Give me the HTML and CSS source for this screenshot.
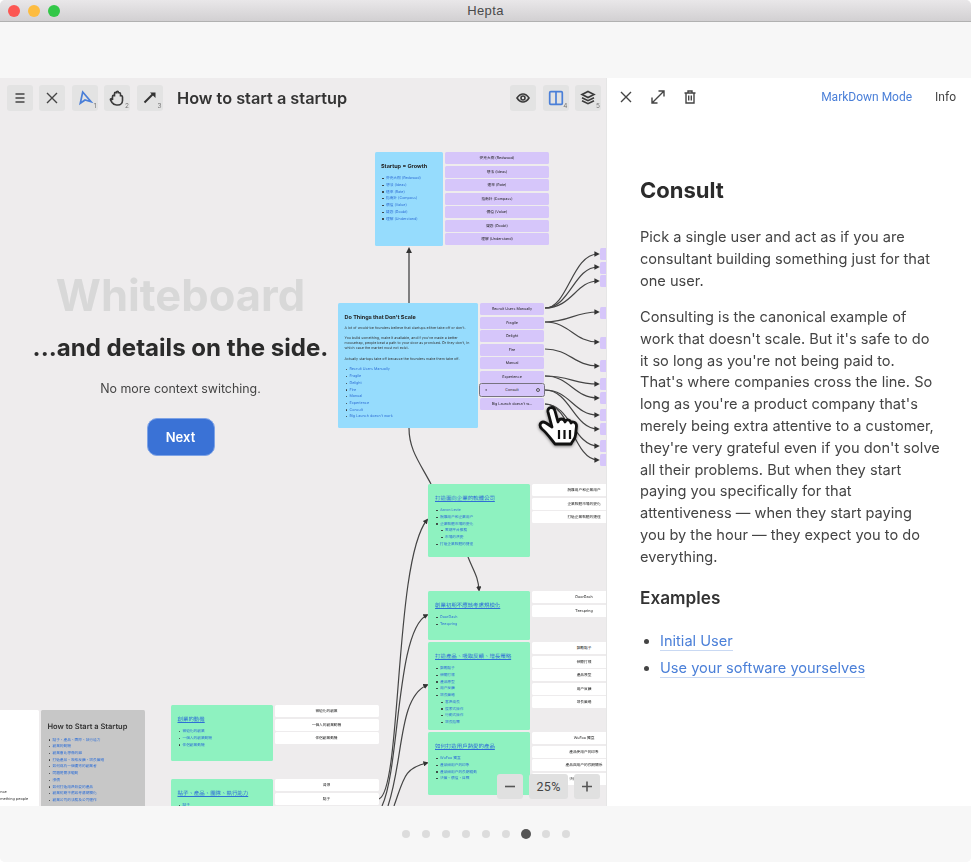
FILE: index.html
```html
<!DOCTYPE html>
<html lang="en">
<head>
<meta charset="utf-8">
<title>Hepta</title>
<link rel="stylesheet" href="styles.css">
</head>
<body>
<div class="window">
  <header class="titlebar">
    <div class="lights"><i class="light red"></i><i class="light yellow"></i><i class="light green"></i></div>
    <span class="app-name">Hepta</span>
  </header>
  <div class="band"></div>
  <main class="main">
    <section class="board">
      <svg class="wires" viewBox="0 0 606 728" width="606" height="728">
        <defs><marker id="tip" viewBox="0 0 6 6" refX="4" refY="3" markerWidth="4.500" markerHeight="4.500" orient="auto"><path d="M0 0L6 3L0 6Z" fill="#333"/></marker></defs>
        <g fill="none" stroke="#444" stroke-width="1.200" marker-end="url(#tip)">
          <path d="M409 225V171" stroke-width="1.300"/>
          <path d="M545 230C568 230 572 176 598 176"/>
          <path d="M545 230C570 230 574 189 598 189"/>
          <path d="M545 230C572 230 576 203 598 203"/>
          <path d="M545 244C570 244 574 234 598 234"/>
          <path d="M545 244C570 244 574 264 598 264"/>
          <path d="M545 271C570 271 574 288 598 288"/>
          <path d="M545 298C570 298 574 306 598 306"/>
          <path d="M545 298C570 298 574 320 598 320"/>
          <path d="M545 312C570 312 574 337 598 337"/>
          <path d="M545 312C570 312 574 351 598 351"/>
          <path d="M545 326C570 326 574 368 598 368"/>
          <path d="M545 326C570 326 574 382 598 382"/>
          <path d="M468 479C474 494 478 498 479 512"/>
          <path d="M379 721C402 712 394 482 427 442"/>
          <path d="M382 728C400 690 396 552 427 537"/>
          <path d="M388 728C404 680 398 620 427 607"/>
          <path d="M394 728C404 700 404 690 427 685"/>
        </g>
        <path class="wire-plain" d="M409 350C409 372 420 385 431 406"/>
      </svg>

      <div class="node startup">
        <div class="card blue">
          <h3 class="card-title">Startup = Growth</h3>
          <ul class="items">
            <li><a>麥克大樹 (Redwood)</a></li><li><a>想法 (Ideas)</a></li><li><a>速率 (Rate)</a></li><li><a>指南針 (Compass)</a></li><li><a>價值 (Value)</a></li><li><a>疑惑 (Doubt)</a></li><li><a>理解 (Understand)</a></li>
          </ul>
        </div>
        <div class="rows purple">
          <div class="row">麥克大樹 (Redwood)</div><div class="row">想法 (Ideas)</div><div class="row">速率 (Rate)</div><div class="row">指南針 (Compass)</div><div class="row">價值 (Value)</div><div class="row">疑惑 (Doubt)</div><div class="row">理解 (Understand)</div>
        </div>
      </div>

      <div class="node scale">
        <div class="card blue">
          <h3 class="card-title">Do Things that Don't Scale</h3>
          <p class="note">A lot of would-be founders believe that startups either take off or don't.</p>
          <p class="note">You build something, make it available, and if you've made a better mousetrap, people beat a path to your door as promised. Or they don't, in which case the market must not exist.</p>
          <p class="note after-gap">Actually startups take off because the founders make them take off.</p>
          <ul class="items">
            <li><a>Recruit Users Manually</a></li><li><a>Fragile</a></li><li><a>Delight</a></li><li><a>Fire</a></li><li><a>Manual</a></li><li><a>Experience</a></li><li><a>Consult</a></li><li><a>Big Launch doesn't work</a></li>
          </ul>
        </div>
        <div class="rows purple">
          <div class="row">Recruit Users Manually</div><div class="row">Fragile</div><div class="row">Delight</div><div class="row">Fire</div><div class="row">Manual</div><div class="row">Experience</div>
          <div class="row active"><span class="mini-x">×</span>Consult<span class="mini-o"></span></div>
          <div class="row">Big Launch doesn't w...</div>
        </div>
      </div>

      <div class="stub s1"></div><div class="stub s2"></div><div class="stub s3"></div><div class="stub s4"></div><div class="stub s5"></div><div class="stub s6"></div><div class="stub s7"></div><div class="stub s8"></div><div class="stub s9"></div><div class="stub s10"></div><div class="stub s11"></div><div class="stub s12"></div>

      <div class="node g1">
        <div class="card mint">
          <h3 class="card-link"><a>打造面向企業的軟體公司</a></h3>
          <ul class="items">
            <li><a>Aaron Levie</a></li><li><a>脫離用户和企業用户</a></li><li><a>企業軟體市場的變化</a>
              <ul><li><a>雲端平台服務</a></li><li><a>市場的演變</a></li></ul></li><li><a>打造企業軟體的捷徑</a></li>
          </ul>
        </div>
        <div class="rows">
          <div class="row">脫離用户和企業用户</div><div class="row">企業軟體市場的變化</div><div class="row">打造企業軟體的捷徑</div>
        </div>
      </div>

      <div class="node g2">
        <div class="card mint">
          <h3 class="card-link"><a>創業初期不應該考慮規模化</a></h3>
          <ul class="items"><li><a>DoorDash</a></li><li><a>Teespring</a></li></ul>
        </div>
        <div class="rows"><div class="row">DoorDash</div><div class="row">Teespring</div></div>
      </div>

      <div class="node g3">
        <div class="card mint">
          <h3 class="card-link"><a>打造產品、吸取反饋、增長策略</a></h3>
          <ul class="items">
            <li><a>鼓勵點子</a></li><li><a>傾聽打樣</a></li><li><a>產品原型</a></li><li><a>用户反饋</a></li><li><a>增長策略</a>
              <ul><li><a>客戶成長</a></li><li><a>搜索式操作</a></li><li><a>行動式操作</a></li><li><a>增長指標</a></li></ul></li>
          </ul>
        </div>
        <div class="rows">
          <div class="row">鼓勵點子</div><div class="row">傾聽打樣</div><div class="row">產品原型</div><div class="row">用户反饋</div><div class="row">增長策略</div>
        </div>
      </div>

      <div class="node g4">
        <div class="card mint">
          <h3 class="card-link"><a>如何打造用戶熱愛的產品</a></h3>
          <ul class="items"><li><a>WuFoo 獨立</a></li><li><a>產品給用户的印象</a></li><li><a>產品給用户的長期驅動</a></li><li><a>決策、價值、目標</a></li></ul>
        </div>
        <div class="rows">
          <div class="row">WuFoo 獨立</div><div class="row">產品使用户的印象</div><div class="row">產品與用户的長期關係</div><div class="row">決策、價值、目標</div>
        </div>
      </div>

      <div class="node ga">
        <div class="card mint">
          <h3 class="card-link"><a>創業的動機</a></h3>
          <ul class="items"><li><a>被迫化的創業</a></li><li><a>一個人的創業動機</a></li><li><a>伴侶創業動機</a></li></ul>
        </div>
        <div class="rows"><div class="row">被迫化的創業</div><div class="row">一個人的創業動機</div><div class="row">伴侶創業動機</div></div>
      </div>

      <div class="node gb">
        <div class="card mint">
          <h3 class="card-link"><a>點子、產品、團隊、執行能力</a></h3>
          <ul class="items"><li><a>點子</a></li></ul>
        </div>
        <div class="rows"><div class="row">資源</div><div class="row">點子</div><div class="row row-empty"></div></div>
      </div>

      <div class="node root">
        <div class="edge-card"><p>ance</p><p>omething people</p></div>
        <div class="card gray">
          <h3 class="root-title">How to Start a Startup</h3>
          <ul class="items">
            <li><a>點子、產品、團隊、執行能力</a></li><li><a>創業的動機</a></li><li><a>創業會比想像的難</a></li><li><a>打造產品、吸取反饋、增長策略</a></li><li><a>如何成為一個優秀的創業者</a></li><li><a>問題是需求驅動</a></li><li><a>漲價</a></li><li><a>如何打造用戶熱愛的產品</a></li><li><a>創業初期不應該考慮規模化</a></li><li><a>創業公司的法務及公司運作</a></li>
          </ul>
        </div>
      </div>

      <svg class="pointer" viewBox="0 0 44 44" width="44" height="44">
        <path d="M14 24L10 9C9 3.500 16 3 17 8L20 19C21 15 26 15 27 19C28 16 32 16 33 20C34 18 38.500 19 38.500 23L37.500 32C37.500 36 34 38 33 41L17 41C13 36 9 30 4 26C0 22 3 17 8 20Z"/>
        <path class="pointer-lines" d="M21 27V36M26.500 27V36M32 27V36"/>
      </svg>

      <div class="toolbar">
        <div class="tools">
          <button class="tool"><svg viewBox="0 0 26 26"><path d="M8.500 9H17.500M8.500 13H17.500M8.500 17H17.500"/></svg></button>
          <button class="tool"><svg viewBox="0 0 26 26"><path d="M8 8L18 18M18 8L8 18"/></svg></button>
          <button class="tool"><svg class="on" viewBox="0 0 26 26"><path d="M10.700 7L19 16.700L13 15L8.300 18.300Z"/></svg><sub>1</sub></button>
          <button class="tool"><svg class="heavy" viewBox="0 0 26 26"><path d="M8.500 15V11.500C8.500 10 10.500 10 10.500 11.500V8.500C10.500 7 12.500 7 12.500 8.500V7.500C12.500 6 14.500 6 14.500 7.500V8.500C14.500 7.500 16.500 7.500 16.500 9V11.500C16.500 10.500 18.500 10.500 18.500 12V15.500C18.500 18 16.500 20 14 20H12.500C10.500 20 9 19 8 17.500L6.500 15C6 13.500 7.800 13 8.500 15Z"/></svg><sub>2</sub></button>
          <button class="tool"><svg class="bold" viewBox="0 0 26 26"><path d="M7.500 17.500L16 9"/><path class="solid" d="M13 7.500H18.500V13Z"/></svg><sub>3</sub></button>
        </div>
        <h2 class="doc-title">How to start a startup</h2>
        <div class="tools">
          <button class="tool"><svg class="heavy" viewBox="0 0 26 26"><path d="M7 13C9 10 11 9 13 9S17 10 19 13C17 16 15 17 13 17S9 16 7 13Z"/><circle cx="13" cy="13" r="2"/></svg></button>
          <button class="tool"><svg class="on" viewBox="0 0 26 26"><rect x="6.700" y="6.700" width="12.600" height="12.600" rx="1"/><path d="M13 6.700V19.300"/></svg><sub>4</sub></button>
          <button class="tool"><svg class="heavy" viewBox="0 0 26 26"><path d="M13 6.500L19 9.500L13 12.500L7 9.500Z"/><path d="M7 12.700L13 15.700L19 12.700M7 15.700L13 18.700L19 15.700"/></svg><sub>5</sub></button>
        </div>
      </div>

      <div class="hero">
        <h1 class="hero-faint">Whiteboard</h1>
        <p class="hero-main">...and details on the side.</p>
        <p class="hero-sub">No more context switching.</p>
        <button class="next">Next</button>
      </div>

      <div class="zoom">
        <button class="zoom-btn"><svg viewBox="0 0 26 25"><path d="M8 12.500H18"/></svg></button>
        <button class="zoom-btn pct">25%</button>
        <button class="zoom-btn"><svg viewBox="0 0 26 25"><path d="M8 12.500H18M13 7.500V17.500"/></svg></button>
      </div>
    </section>

    <aside class="panel">
      <div class="panel-bar">
        <svg class="ico" viewBox="0 0 20 20"><path d="M5 5L15 15M15 5L5 15"/></svg>
        <svg class="ico" viewBox="0 0 20 20"><path d="M4 16L16 4M10.500 4H16V9.500M4 10.500V16H9.500"/></svg>
        <svg class="ico" viewBox="0 0 20 20"><path d="M4.500 6H15.500M8 6V4H12V6M6 6V16H14V6M8.700 8.500V13.500M11.300 8.500V13.500"/></svg>
        <a class="mode">MarkDown Mode</a>
        <span class="info">Info</span>
      </div>
      <article class="doc">
        <h1>Consult</h1>
        <p>Pick a single user and act as if you are consultant building something just for that one user.</p>
        <p>Consulting is the canonical example of work that doesn't scale. But it's safe to do it so long as you're not being paid to. That's where companies cross the line. So long as you're a product company that's merely being extra attentive to a customer, they're very grateful even if you don't solve all their problems. But when they start paying you specifically for that attentiveness — when they start paying you by the hour — they expect you to do everything.</p>
        <h2>Examples</h2>
        <ul>
          <li><a>Initial User</a></li>
          <li><a>Use your software yourselves</a></li>
        </ul>
      </article>
    </aside>
  </main>
  <footer class="pager">
    <i class="dot"></i><i class="dot"></i><i class="dot"></i><i class="dot"></i><i class="dot"></i><i class="dot"></i><i class="dot current"></i><i class="dot"></i><i class="dot"></i>
  </footer>
</div>
</body>
</html>
```
FILE: styles.css
```css
* { box-sizing: border-box; }
html, body { margin: 0; height: 100%; background: #fff; }
body { font-family: Inter, "Noto Sans CJK TC", sans-serif; overflow: hidden; }
ul, p, h1, h2, h3 { margin: 0; padding: 0; }
button { font-family: inherit; border: 0; padding: 0; }

.window { width: 971px; height: 862px; display: flex; flex-direction: column; border-radius: 5px; overflow: hidden; background: #f7f7f7; filter: blur(.3px); }

.titlebar { height: 22px; flex: none; position: relative; display: flex; align-items: center; justify-content: center; background: linear-gradient(#e9e7e9, #d2d0d2); border-bottom: 1px solid #b1b1b1; }
.lights { position: absolute; left: 8px; top: 5px; display: flex; gap: 8px; }
.light { width: 12px; height: 12px; border-radius: 50%; }
.red { background: #fc5753; }
.yellow { background: #fdbc40; }
.green { background: #33c748; }
.app-name { font: 13px "Liberation Sans", sans-serif; color: #4a4a4a; letter-spacing: .4px; }

.band { height: 56px; flex: none; background: #f7f7f7; }

.main { height: 728px; flex: none; display: flex; }
.board { width: 606px; flex: none; position: relative; overflow: hidden; background: #eeeced; }
.panel { flex: 1; background: #fff; border-left: 1px solid #e6e6e6; }

.wires { position: absolute; left: 0; top: 0; filter: blur(.25px); }
.wire-plain { fill: none; stroke: #444; stroke-width: 1.200; }

.node { position: absolute; display: flex; gap: 2px; align-items: flex-start; text-rendering: geometricPrecision; filter: blur(.5px); }
.card { border-radius: 1.500px; flex: none; }
.blue { background: #96dcfd; }
.mint { background: #8ef2c0; width: 102px; padding: 10.500px 7px; }
.gray { background: #c7c7c7; width: 104px; height: 120px; padding: 12px 6.500px; }
.rows { display: flex; flex-direction: column; gap: 1.500px; width: 104px; flex: none; }
.row { height: 12px; border-radius: 1.500px; background: #fff; font-size: 3.700px; line-height: 12px; color: #222; text-align: center; position: relative; }
.purple .row { background: #d6c6fa; }

.card-title { font-size: 5.500px; font-weight: 700; color: #222; line-height: 8px; margin-bottom: 4.800px; }
.card-link { font-size: 5.450px; font-weight: 400; line-height: 8px; margin-bottom: 4.800px; }
.card-link a { color: #2f6fd6; text-decoration: underline; text-decoration-thickness: .4px; }
.root-title { font-size: 7.500px; font-weight: 600; color: #333; line-height: 10px; margin-bottom: 4.650px; }
.note { font-size: 3.600px; line-height: 5.300px; color: #333; margin-bottom: 4px; }
.after-gap { margin-top: 5.700px; }
.items { list-style: none; padding-left: 5px; font-size: 3.700px; line-height: 6.700px; color: #333; }
.items ul { list-style: none; padding-left: 5px; }
.items li { position: relative; }
.items li::before { content: ""; position: absolute; left: -3.600px; top: 2.700px; width: 1.300px; height: 1.300px; border-radius: 50%; background: #333; }
.items a { color: #2f6fd6; }

.startup { left: 374.500px; top: 74px; }
.startup .card { width: 68.500px; height: 94px; padding: 10.500px 6.500px; }
.scale { left: 338px; top: 225px; }
.scale .card { width: 140px; height: 125px; padding: 10.500px 6.500px; }
.scale .rows { width: 64px; }
.active { outline: 1px solid #77737f; outline-offset: -.5px; }
.mini-x { position: absolute; left: 5px; top: 0; }
.mini-o { position: absolute; right: 4px; top: 4px; width: 4px; height: 4px; border: .6px solid #555; border-radius: 50%; }

.g1 { left: 428px; top: 406px; }
.g1 .card { height: 73px; }
.g2 { left: 428px; top: 513px; }
.g2 .card { height: 49px; }
.g3 { left: 428px; top: 564px; }
.g3 .card { height: 88px; }
.g4 { left: 428px; top: 654px; }
.g4 .card { height: 63px; }
.ga { left: 170.500px; top: 627px; }
.ga .card { height: 56px; }
.gb { left: 170.500px; top: 701px; }
.gb .card { height: 56px; }
.root { left: -65px; top: 632px; }
.edge-card { width: 104px; height: 120px; background: #fff; border-radius: 1.500px; padding-top: 78px; padding-left: 65px; font-size: 3.800px; line-height: 7px; color: #333; text-indent: -2px; }

.stub { position: absolute; left: 600px; width: 20px; height: 12px; background: #d6c6fa; border-radius: 1.500px; filter: blur(.3px); }
.s1 { top: 170px; } .s2 { top: 184px; } .s3 { top: 197px; } .s4 { top: 229px; }
.s5 { top: 259px; } .s6 { top: 282px; } .s7 { top: 300px; } .s8 { top: 314px; }
.s9 { top: 331px; } .s10 { top: 345px; } .s11 { top: 362px; } .s12 { top: 376px; }

.pointer { position: absolute; left: 538px; top: 325px; filter: drop-shadow(0 1px 1.500px rgba(0,0,0,.5)); }
.pointer path { fill: #fff; stroke: #111; stroke-width: 2.800px; stroke-linejoin: round; }
.pointer .pointer-lines { fill: none; stroke: #111; stroke-width: 2.200px; }

.toolbar { position: absolute; left: 6.500px; right: 5px; top: 7px; display: flex; align-items: center; }
.tools { display: flex; gap: 6.500px; }
.doc-title { flex: 1; margin-left: 14.500px; padding-bottom: 1px; font-size: 16.300px; font-weight: 600; color: #333; }
.tool { width: 26px; height: 26px; background: #e3e3e3; border-radius: 3px; position: relative; display: block; }
.tool svg, .zoom-btn svg { width: 26px; height: 26px; display: block; fill: none; stroke: #444; stroke-width: 1.400px; }
.tool svg.on { stroke: #4a7fd8; stroke-width: 1.700px; }
.tool svg.heavy { stroke: #3a3a3a; stroke-width: 1.600px; }
.tool svg.bold { stroke: #333; stroke-width: 2px; }
.tool .solid { fill: #333; stroke: none; }
.tool sub { position: absolute; right: 1px; bottom: 1px; font-size: 6.500px; line-height: 8px; color: #777; vertical-align: baseline; }

.hero { position: absolute; left: 0; top: 188.500px; width: 361px; display: flex; flex-direction: column; align-items: center; }
.hero-faint { font-size: 43.500px; line-height: 56px; font-weight: 700; color: #d8d8d8; }
.hero-main { font-size: 24.100px; line-height: 32px; font-weight: 700; color: #2b2b2b; margin-top: 9px; }
.hero-sub { font-size: 12.400px; line-height: 18px; color: #444; margin-top: 16.500px; }
.next { width: 68px; height: 38px; margin-top: 20px; border-radius: 10px; background: #3a72d6; border: 1px solid #7ea3e6; color: #fff; font-size: 13px; font-weight: 600; }

.zoom { position: absolute; left: 496.700px; top: 696px; display: flex; gap: 6.400px; }
.zoom-btn { width: 26px; height: 25px; background: #e0e0e0; border-radius: 3px; font: 12.500px Roboto, sans-serif; letter-spacing: .3px; color: #444; }
.zoom-btn svg { stroke: #555; stroke-width: 1.600px; height: 25px; }
.pct { width: 39px; }

.panel-bar { height: 38px; display: flex; align-items: center; padding-left: 9px; padding-right: 15px; gap: 12px; }
.ico { width: 20px; height: 20px; fill: none; stroke: #444; stroke-width: 1.400px; }
.mode { margin-left: auto; font: 12px Roboto, sans-serif; color: #4a7fd8; }
.info { margin-left: 11px; font: 12px Roboto, sans-serif; color: #444; }

.doc { padding: 60px 31px 0 33px; color: #444; font-size: 14.600px; line-height: 21.800px; }
.doc h1 { font-size: 22px; line-height: 28px; font-weight: 700; color: #2b2b2b; margin-bottom: 23px; }
.doc p { margin-bottom: 14.600px; }
.doc h2 { font-size: 17.200px; line-height: 22px; font-weight: 600; color: #333; margin-top: 18px; margin-bottom: 22px; }
.doc ul { padding-left: 20px; list-style: disc; }
.doc li { margin-bottom: 5.200px; }
.doc a { color: #4a7fd8; border-bottom: 1px solid #c9d9f3; }

.pager { flex: 1; display: flex; align-items: center; justify-content: center; gap: 12px; background: #f7f7f7; }
.dot { width: 8px; height: 8px; border-radius: 50%; background: #dcdcdc; }
.current { width: 10px; height: 10px; margin: 0 -1px; background: #555; }
```
